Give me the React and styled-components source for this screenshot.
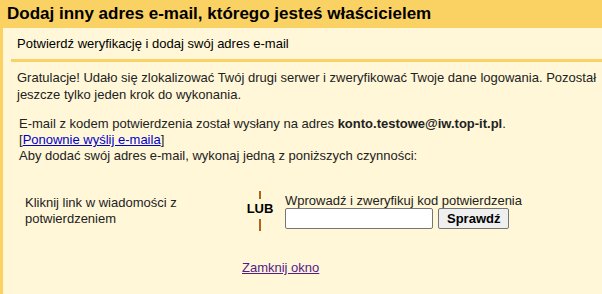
import styled, { createGlobalStyle } from 'styled-components';

// Kolory
const yellow = '#fad163';
const cream = '#fff7d7';
const textColor = '#222';

const GlobalStyle = createGlobalStyle`
  html, body {
    margin: 0;
    padding: 0;
    background: ${cream};
  }
  body {
    font-family: Arial, 'Liberation Sans', sans-serif;
    font-size: 13px;
    color: ${textColor};
  }
`;

const Page = styled.div`
  width: 602px;
  height: 294px;
  display: flex;
  flex-direction: column;
  background: ${cream};
`;

const Header = styled.h1`
  margin: 0;
  height: 28px;
  padding: 0 0 0 7px;
  display: flex;
  align-items: center;
  background: ${yellow};
  font-size: 17px;
  font-weight: bold;
  color: #000;
`;

const Body = styled.div`
  flex: 1;
  border-left: 3px solid ${yellow};
  display: flex;
  flex-direction: column;
`;

const SubHeader = styled.div`
  margin-left: 8px;
  padding: 8px 0 8px 6px;
  border-bottom: 3px solid ${yellow};
  font-size: 13px;
  color: #000;
`;

const Intro = styled.p`
  margin: 7px 0 0 14px;
  line-height: 17px;
`;

const Info = styled.div`
  margin: 13px 0 0 16px;
  line-height: 16px;
`;

const Link = styled.a`
  color: ${(p) => (p.$visited ? '#551a8b' : '#0000cc')};
  text-decoration: underline;
  cursor: pointer;
`;

const Options = styled.div`
  display: flex;
  align-items: center;
  margin-top: 27px;
`;

const OptionLeft = styled.div`
  width: 200px;
  padding-left: 22px;
  line-height: 16px;
`;

const Divider = styled.div`
  display: flex;
  flex-direction: column;
  align-items: center;
  width: 30px;
  margin-left: 20px;
  font-weight: bold;
  color: #000;
`;

const DividerBar = styled.span`
  width: 2px;
  height: ${(p) => p.$h}px;
  background: #b0651a;
`;

const DividerLabel = styled.span`
  line-height: 20px;
`;

const OptionRight = styled.div`
  margin-left: 10px;
  display: flex;
  flex-direction: column;
`;

const CodeRow = styled.div`
  display: flex;
  gap: 5px;
`;

const CodeInput = styled.input`
  width: 148px;
  height: 21px;
  box-sizing: border-box;
  border: 1px solid #767676;
  border-radius: 2px;
  background: #fff;
  padding: 1px 2px;
`;

const CheckButton = styled.button`
  height: 21px;
  padding: 0 8px;
  box-sizing: border-box;
  border: 1px solid #767676;
  border-radius: 2px;
  background: #efefef;
  font-family: Arial, 'Liberation Sans', sans-serif;
  font-size: 13px;
  font-weight: bold;
  color: #000;
`;

const Footer = styled.div`
  margin-top: 29px;
  padding-left: 239px;
`;

const App = () => (
  <>
    <GlobalStyle />
    <Page>
      <Header>Dodaj inny adres e-mail, którego jesteś właścicielem</Header>
      <Body>
        <SubHeader>Potwierdź weryfikację i dodaj swój adres e-mail</SubHeader>
        <Intro>
          Gratulacje! Udało się zlokalizować Twój drugi serwer i zweryfikować Twoje dane logowania. Pozostał
          <br />
          jeszcze tylko jeden krok do wykonania.
        </Intro>
        <Info>
          E-mail z kodem potwierdzenia został wysłany na adres <b>konto.testowe@iw.top-it.pl</b>.
          <br />
          [<Link>Ponownie wyślij e-maila</Link>]
          <br />
          Aby dodać swój adres e-mail, wykonaj jedną z poniższych czynności:
        </Info>
        <Options>
          <OptionLeft>
            Kliknij link w wiadomości z
            <br />
            potwierdzeniem
          </OptionLeft>
          <Divider>
            <DividerBar $h={8} />
            <DividerLabel>LUB</DividerLabel>
            <DividerBar $h={12} />
          </Divider>
          <OptionRight>
            <span>Wprowadź i zweryfikuj kod potwierdzenia</span>
            <CodeRow>
              <CodeInput type="text" />
              <CheckButton>Sprawdź</CheckButton>
            </CodeRow>
          </OptionRight>
        </Options>
        <Footer>
          <Link $visited>Zamknij okno</Link>
        </Footer>
      </Body>
    </Page>
  </>
);

export default App;
